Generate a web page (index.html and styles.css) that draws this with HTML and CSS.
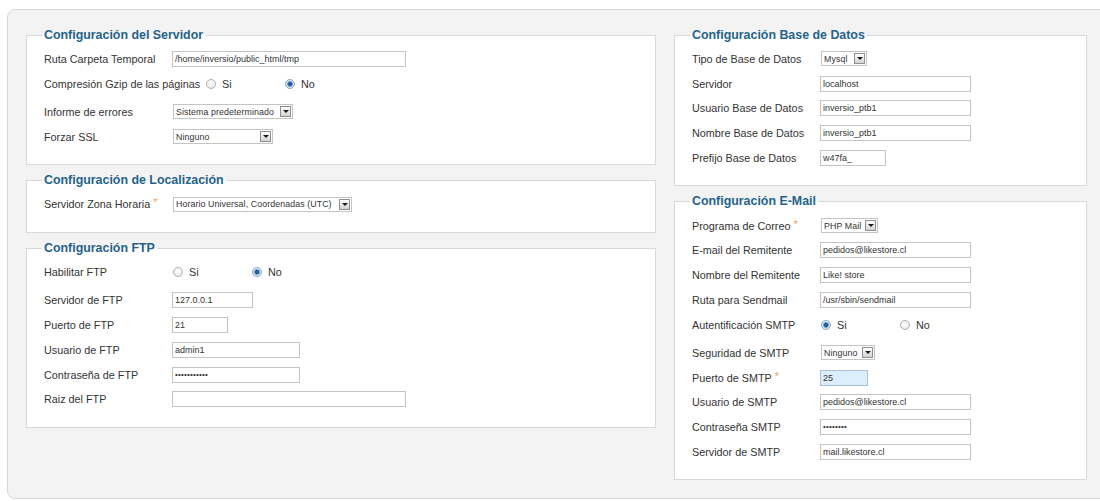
FILE: index.html
```html
<!DOCTYPE html>
<html lang="es">
<head>
<meta charset="utf-8">
<title>Configuración global</title>
<link rel="stylesheet" href="styles.css">
</head>
<body>
<div class="panel">
  <div class="col col-left">
    <fieldset class="box">
      <legend>Configuración del Servidor</legend>
      <div class="row"><span class="lbl">Ruta Carpeta Temporal</span><span class="field w234">/home/inversio/public_html/tmp</span></div>
      <div class="row radio-row"><span class="lbl">Compresión Gzip de las páginas</span><span class="opt"><span class="radio"></span>Si</span><span class="opt"><span class="radio on"></span>No</span></div>
      <div class="row"><span class="lbl">Informe de errores</span><span class="select s120"><span class="sel-text">Sistema predeterminado</span><span class="sel-btn"></span></span></div>
      <div class="row"><span class="lbl">Forzar SSL</span><span class="select s100"><span class="sel-text">Ninguno</span><span class="sel-btn"></span></span></div>
    </fieldset>
    <fieldset class="box">
      <legend>Configuración de Localización</legend>
      <div class="row"><span class="lbl">Servidor Zona Horaria <span class="req">*</span></span><span class="select s179"><span class="sel-text">Horario Universal, Coordenadas (UTC)</span><span class="sel-btn"></span></span></div>
    </fieldset>
    <fieldset class="box">
      <legend>Configuración FTP</legend>
      <div class="row radio-row"><span class="lbl">Habilitar FTP</span><span class="opt"><span class="radio"></span>Si</span><span class="opt"><span class="radio on"></span>No</span></div>
      <div class="row"><span class="lbl">Servidor de FTP</span><span class="field w81">127.0.0.1</span></div>
      <div class="row"><span class="lbl">Puerto de FTP</span><span class="field w56">21</span></div>
      <div class="row"><span class="lbl">Usuario de FTP</span><span class="field w128">admin1</span></div>
      <div class="row"><span class="lbl">Contraseña de FTP</span><span class="field w128 pass">•••••••••••</span></div>
      <div class="row"><span class="lbl">Raiz del FTP</span><span class="field w234"></span></div>
    </fieldset>
  </div>
  <div class="col col-right">
    <fieldset class="box">
      <legend>Configuración Base de Datos</legend>
      <div class="row"><span class="lbl">Tipo de Base de Datos</span><span class="select s45"><span class="sel-text">Mysql</span><span class="sel-btn"></span></span></div>
      <div class="row"><span class="lbl">Servidor</span><span class="field w150">localhost</span></div>
      <div class="row"><span class="lbl">Usuario Base de Datos</span><span class="field w150">inversio_ptb1</span></div>
      <div class="row"><span class="lbl">Nombre Base de Datos</span><span class="field w150">inversio_ptb1</span></div>
      <div class="row"><span class="lbl">Prefijo Base de Datos</span><span class="field w65">w47fa_</span></div>
    </fieldset>
    <fieldset class="box">
      <legend>Configuración E-Mail</legend>
      <div class="row"><span class="lbl">Programa de Correo <span class="req">*</span></span><span class="select s57"><span class="sel-text">PHP Mail</span><span class="sel-btn"></span></span></div>
      <div class="row"><span class="lbl">E-mail del Remitente</span><span class="field w150">pedidos@likestore.cl</span></div>
      <div class="row"><span class="lbl">Nombre del Remitente</span><span class="field w150">Like! store</span></div>
      <div class="row"><span class="lbl">Ruta para Sendmail</span><span class="field w150">/usr/sbin/sendmail</span></div>
      <div class="row radio-row"><span class="lbl">Autentificación SMTP</span><span class="opt"><span class="radio on"></span>Si</span><span class="opt"><span class="radio"></span>No</span></div>
      <div class="row"><span class="lbl">Seguridad de SMTP</span><span class="select s54"><span class="sel-text">Ninguno</span><span class="sel-btn"></span></span></div>
      <div class="row"><span class="lbl">Puerto de SMTP <span class="req">*</span></span><span class="field w48 focus">25</span></div>
      <div class="row"><span class="lbl">Usuario de SMTP</span><span class="field w150">pedidos@likestore.cl</span></div>
      <div class="row"><span class="lbl">Contraseña SMTP</span><span class="field w150 pass">••••••••</span></div>
      <div class="row"><span class="lbl">Servidor de SMTP</span><span class="field w150">mail.likestore.cl</span></div>
    </fieldset>
  </div>
</div>
</body>
</html>
```
FILE: styles.css
```css
html, body {
  margin: 0;
  padding: 0;
  background: #ffffff;
  overflow: hidden;
}

body {
  font-family: "Liberation Sans", Arial, sans-serif;
  color: #333333;
}

.panel {
  margin: 9px 0 0 7px;
  width: 1110px;
  height: 490px;
  box-sizing: border-box;
  border: 1px solid #d6d6d6;
  border-radius: 8px;
  background: #f3f3f3;
  padding: 17.5px 0 0 18px;
  display: flex;
  gap: 18px;
  align-items: flex-start;
}

.col-left {
  width: 630px;
}

.col-right {
  width: 413px;
}

.box {
  margin: 0 0 8px 0;
  padding: 4px 17px 15px 17px;
  border: 1px solid #d9d9d9;
  background: #ffffff;
  min-inline-size: 0;
  box-sizing: border-box;
}

.box legend {
  font-size: 12.4px;
  line-height: 15px;
  font-weight: bold;
  color: #24628a;
  padding: 0 2px;
  margin-left: -2px;
}

.row {
  height: 24.75px;
  display: flex;
  align-items: center;
}

.radio-row {
  margin-bottom: 3.5px;
}

.lbl {
  min-width: 128px;
  box-sizing: border-box;
  padding-right: 5px;
  flex-shrink: 0;
  white-space: nowrap;
  font-size: 10.8px;
  color: #333333;
}

.req {
  color: #f2a254;
  font-size: 11px;
  position: relative;
  top: -2px;
}

.field {
  height: 16px;
  box-sizing: border-box;
  border: 1px solid #c4c4c4;
  background: #ffffff;
  font-size: 9px;
  line-height: 14px;
  padding: 0 2px;
  color: #333333;
  white-space: nowrap;
  overflow: hidden;
}

.field.pass {
  font-size: 8px;
  letter-spacing: 0.2px;
}

.field.focus {
  background: #dcedfb;
  border-color: #a9c3db;
}

.w234 { width: 234px; }
.w150 { width: 151px; }
.w128 { width: 128px; }
.w81 { width: 81px; }
.w65 { width: 66px; }
.w56 { width: 56px; }
.w48 { width: 48px; }

.select {
  height: 15px;
  box-sizing: border-box;
  border: 1px solid #c4c4c4;
  background: #ffffff;
  display: inline-flex;
  align-items: center;
  justify-content: space-between;
  padding: 0 1px 0 2px;
  margin-left: 1px;
}

.sel-text {
  font-size: 8.8px;
  color: #333333;
  white-space: nowrap;
  letter-spacing: 0.1px;
}

.sel-btn {
  width: 11px;
  height: 11px;
  box-sizing: border-box;
  border: 1px solid #8f8f8f;
  background: linear-gradient(#ffffff, #d2d2d2);
  display: flex;
  align-items: center;
  justify-content: center;
  flex-shrink: 0;
}

.sel-btn::after {
  content: "";
  width: 0;
  height: 0;
  border-left: 3px solid transparent;
  border-right: 3px solid transparent;
  border-top: 3px solid #1a1a1a;
}

.s120 { width: 120px; }
.s100 { width: 100px; }
.s179 { width: 179px; }
.s45 { width: 46px; }
.s57 { width: 57px; }
.s54 { width: 54px; }

.opt {
  width: 79px;
  display: inline-flex;
  align-items: center;
  font-size: 10.8px;
  color: #333333;
  flex-shrink: 0;
}

.radio {
  width: 10px;
  height: 10px;
  box-sizing: border-box;
  border: 1px solid #b0b0b0;
  border-radius: 50%;
  background: radial-gradient(circle at 50% 40%, #ffffff 0, #ececec 70%, #dcdcdc 100%);
  margin: 0 6px 0 1px;
  flex-shrink: 0;
}

.radio.on {
  border-color: #8aa7c4;
  background: radial-gradient(circle, #1d4e8c 0, #2c62a6 1.8px, #7fa6d2 2.6px, #dbe7f4 3.4px, #f4f8fc 100%);
}
```
